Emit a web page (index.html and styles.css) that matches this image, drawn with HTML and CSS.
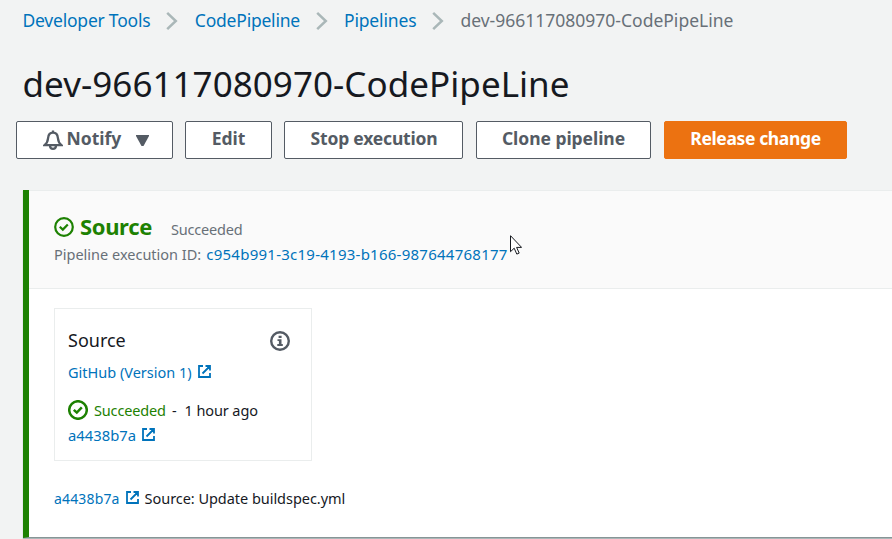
FILE: index.html
```html
<!DOCTYPE html>
<html lang="en">
<head>
<meta charset="utf-8">
<title>dev-966117080970-CodePipeLine</title>
<link rel="stylesheet" href="styles.css">
</head>
<body>
<svg class="defs" width="0" height="0">
  <symbol id="check" viewBox="0 0 20 20"><circle cx="10" cy="10" r="8.800"/><path d="M5.800 9.800 8.800 12.600l5-5.200"/></symbol>
  <symbol id="ext" viewBox="0 0 13 13"><path d="M5 1H1v11h11V8M7.500 1H12v4.500M11.500 1.500 4.500 8.500M10 1v2h2"/></symbol>
  <symbol id="chev" viewBox="0 0 12 20"><path d="M1.200 1.800 9.800 10l-8.600 8.200"/></symbol>
</svg>
<nav class="crumbs">
  <a class="c1">Developer Tools</a><svg class="chev"><use href="#chev"/></svg>
  <a class="c2">CodePipeline</a><svg class="chev"><use href="#chev"/></svg>
  <a class="c3">Pipelines</a><svg class="chev"><use href="#chev"/></svg>
  <span class="c4">dev-966117080970-CodePipeLine</span>
</nav>
<h1>dev-966117080970-CodePipeLine</h1>
<div class="actions">
  <button class="btn notify">
    <svg class="bell" viewBox="0 0 20 20"><path d="M1.600 15.200h16.800c-2.600-2-3.200-4.200-3.500-7.200C14.600 4.800 12.700 2.700 10 2.700S5.400 4.800 5.100 8c-.3 3-.9 5.200-3.500 7.200ZM10 .5v2M7 16c.3 3.800 5.700 3.800 6 0"/></svg>
    <span>Notify</span>
    <svg class="caret" viewBox="0 0 13 11"><path d="M0 0h13v1L7.500 11h-2L0 1Z"/></svg>
  </button>
  <button class="btn edit">Edit</button>
  <button class="btn stop">Stop execution</button>
  <button class="btn clone">Clone pipeline</button>
  <button class="btn release">Release change</button>
</div>
<section class="stage">
  <header class="stage-head">
    <div class="stage-title"><svg class="check"><use href="#check"/></svg><h2>Source</h2><span class="state">Succeeded</span></div>
    <div class="exec"><span>Pipeline execution ID:</span><a class="exec-id">c954b991-3c19-4193-b166-987644768177</a></div>
  </header>
  <div class="stage-body">
    <article class="card">
      <div class="card-head"><span>Source</span>
        <svg class="info" viewBox="0 0 20 20"><circle cx="10" cy="10" r="8.800"/><path d="M8.600 4.800h3v2.200h-3zM7.500 8.300h4v4.800h1.300V15H7.300v-1.900h1.600v-3H7.500z"/></svg></div>
      <div class="provider"><a>GitHub (Version 1)</a><svg class="ext"><use href="#ext"/></svg></div>
      <div class="status"><svg class="check bold"><use href="#check"/></svg><span class="ok">Succeeded</span><span class="dash">-</span><span class="ago">1 hour ago</span></div>
      <div class="commit"><a>a4438b7a</a><svg class="ext"><use href="#ext"/></svg></div>
    </article>
    <div class="revision"><a>a4438b7a</a><svg class="ext"><use href="#ext"/></svg><span class="message">Source: Update buildspec.yml</span></div>
  </div>
</section>
<svg class="cursor" viewBox="0 0 12 20"><path d="M.5.700v16l3.700-3.500 2.600 5.900 2.400-1-2.600-5.700h5z"/></svg>
</body>
</html>
```
FILE: styles.css
```css
* { box-sizing: border-box; }
body { margin: 0; height: 539px; overflow: hidden; background: #f2f3f3; color: #16191f; font-family: "Noto Sans", sans-serif; font-size: 14.5px; white-space: nowrap; }
svg { flex: none; }
.defs { position: absolute; }
a { color: #0073bb; }

.crumbs { display: flex; align-items: center; height: 42px; padding: 0 0 2px 22.5px; font-size: 17.5px; color: #687078; }
.chev { width: 12px; height: 20px; margin: 2px 16px 0; fill: none; stroke: #aab7b8; stroke-width: 2.5px; }
.c1, .c2 { letter-spacing: -0.22px; }
.c2 { margin-left: 0.5px; }
.c3 { letter-spacing: -0.15px; }

h1 { margin: 0; height: 79px; padding-left: 22.5px; font-size: 35px; line-height: 83px; font-weight: 400; letter-spacing: 0.04px; }

.actions { display: flex; gap: 12px; height: 38px; padding-left: 16px; }
.btn { display: flex; align-items: center; justify-content: center; height: 38px; padding: 0 0 4px; border: 1px solid #545b64; border-radius: 2px; background: #fff; color: #545b64; font: 700 17.5px "Noto Sans", sans-serif; }
.notify { width: 157px; padding-left: 2px; }
.edit { width: 87px; }
.stop { width: 179px; padding-left: 1px; letter-spacing: -0.2px; }
.clone { width: 175px; margin-left: 1px; letter-spacing: -0.05px; }
.release { width: 183px; margin-left: 1px; background: #ec7211; border-color: #ec7211; color: #fff; letter-spacing: -0.37px; }
.bell { width: 20px; height: 20px; margin: 4px 4px 0 1px; fill: none; stroke: #545b64; stroke-width: 2.3px; }
.caret { width: 13px; height: 11px; margin: 4px 0 0 15px; fill: #545b64; }

.stage { margin: 31px 0 0 23px; height: 348px; border-left: 6px solid #1d8102; border-bottom: 1px solid #879596; background: #fff; box-shadow: 0 1px 1px #aab7b8; }
.stage-head { height: 99px; padding: 23px 0 0 25px; border-top: 1px solid #eaeded; border-bottom: 1px solid #eaeded; background: #fafafa; color: #687078; }
.stage-title { display: flex; align-items: center; height: 26px; }
h2 { margin: -2px 19px 0 6px; font-size: 22px; line-height: 26px; color: #1d8102; letter-spacing: -0.35px; }
.state { padding-top: 4px; letter-spacing: -0.2px; }
.check { width: 20px; height: 20px; fill: none; stroke: #1d8102; stroke-width: 2.2px; }
.check.bold { stroke-width: 2.5px; }
.exec { display: flex; gap: 5px; line-height: 26px; padding-top: 1px; }
.exec-id { font-size: 15px; letter-spacing: 0.25px; }

.stage-body { padding: 19px 0 0 25px; }
.card { width: 258px; height: 153px; padding: 20px 13px; border: 1px solid #eaeded; }
.card-head { display: flex; justify-content: space-between; height: 24px; padding-right: 8px; font-size: 18px; line-height: 22px; }
.info { width: 20px; height: 20px; margin-top: 2px; fill: none; stroke: #545b64; stroke-width: 2.4px; }
.info path { fill: #545b64; stroke: none; }
.provider, .status, .commit, .revision { display: flex; align-items: center; height: 26px; }
.provider { margin-top: 6px; }
.status { margin-top: 12px; }
.ok { color: #1d8102; margin-left: 6px; letter-spacing: -0.15px; }
.dash { margin-left: 6px; }
.ago { margin-left: 8px; letter-spacing: -0.1px; }
.commit { height: 24px; font-size: 14.8px; }
.ext { width: 13px; height: 13px; margin: -1px 0 0 6px; fill: none; stroke: #0073bb; stroke-width: 1.8px; }
.revision { margin-top: 24px; }
.revision a { font-size: 14px; letter-spacing: 0.15px; }
.message { margin-left: 6px; letter-spacing: -0.04px; }

.cursor { position: absolute; left: 510px; top: 235px; width: 12px; height: 20px; fill: #fff; stroke: #16191f; stroke-width: 1px; }
```
